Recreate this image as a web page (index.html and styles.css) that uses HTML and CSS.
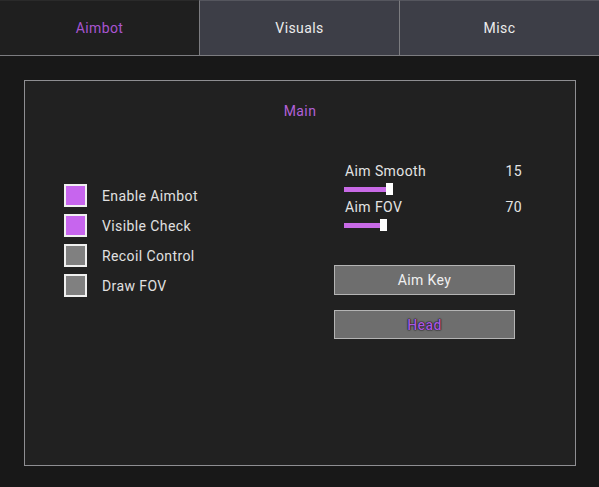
FILE: index.html
```html
<!DOCTYPE html>
<html lang="en">
    <head>
        <meta charset="UTF-8" />
        <meta name="viewport" content="width=device-width, initial-scale=1.0" />
        <title>Menu</title>
        <link rel="stylesheet" href="styles.css">
    </head>
    <body>
        <div class="tabs">
            <div class="tab active">Aimbot</div>
            <div class="tab">Visuals</div>
            <div class="tab">Misc</div>
        </div>

        <div class="panel">
            <div class="panel-title">Main</div>
            <div class="panel-body">
                <div class="checks">
                    <div class="check-row">
                        <span class="box on"></span>
                        <span class="check-label">Enable Aimbot</span>
                    </div>
                    <div class="check-row">
                        <span class="box on"></span>
                        <span class="check-label">Visible Check</span>
                    </div>
                    <div class="check-row">
                        <span class="box"></span>
                        <span class="check-label">Recoil Control</span>
                    </div>
                    <div class="check-row">
                        <span class="box"></span>
                        <span class="check-label">Draw FOV</span>
                    </div>
                </div>

                <div class="controls">
                    <div class="slider">
                        <div class="slider-head">
                            <span>Aim Smooth</span>
                            <span>15</span>
                        </div>
                        <div class="slider-bar">
                            <span class="track" style="width: 43px"></span>
                            <span class="thumb"></span>
                        </div>
                    </div>
                    <div class="slider">
                        <div class="slider-head">
                            <span>Aim FOV</span>
                            <span>70</span>
                        </div>
                        <div class="slider-bar">
                            <span class="track" style="width: 37px"></span>
                            <span class="thumb"></span>
                        </div>
                    </div>

                    <button class="btn">Aim Key</button>
                    <button class="btn btn-purple">Head</button>
                </div>
            </div>
        </div>
    </body>
</html>
```

FILE: styles.css
```css
body {
    margin: 0;
    width: 599px;
    height: 487px;
    background-color: #181818;
    font-family: Roboto, "Liberation Sans", sans-serif;
    font-size: 14px;
    letter-spacing: 0.4px;
    color: #e4e4e4;
}
.tabs {
    display: flex;
    height: 55px;
    border-bottom: 1px solid #7c7c80;
}
.tab {
    flex: 1;
    display: flex;
    justify-content: center;
    align-items: center;
    background-color: #3d3e47;
    border-top: 1px solid #55565e;
    border-left: 1px solid #7c7c80;
    color: #ececec;
}
.tab.active {
    flex: 0 0 199px;
    background-color: #1f1f1f;
    border-top: 1px solid #2a2a2a;
    border-left: none;
    color: #a855d0;
}
.panel {
    box-sizing: border-box;
    margin: 24px 0 0 24px;
    width: 552px;
    height: 386px;
    border: 1px solid #8e8e92;
    background-color: #212121;
}
.panel-title {
    padding-top: 21px;
    line-height: 18px;
    text-align: center;
    color: #b160d8;
}
.panel-body {
    display: flex;
}
.checks {
    width: 270px;
    margin-left: 39px;
    padding-top: 64px;
    display: flex;
    flex-direction: column;
    gap: 7px;
}
.check-row {
    display: flex;
    align-items: center;
    height: 23px;
}
.box {
    box-sizing: border-box;
    width: 23px;
    height: 23px;
    border: 2px solid #f0f0f0;
    background-color: #808080;
}
.box.on {
    background-color: #c765ee;
}
.check-label {
    margin-left: 15px;
    color: #e0e0e0;
}
.controls {
    width: 181px;
    padding-top: 42px;
    display: flex;
    flex-direction: column;
}
.slider {
    height: 36px;
    padding-left: 10px;
    width: 178px;
}
.slider-head {
    display: flex;
    justify-content: space-between;
    line-height: 18px;
    padding-left: 1px;
}
.slider-bar {
    display: flex;
    align-items: center;
    height: 14px;
    margin-top: 2px;
}
.track {
    height: 5px;
    background-color: #c86ae6;
}
.thumb {
    width: 7px;
    height: 12px;
    margin-left: -1px;
    background-color: #ffffff;
}
.btn {
    box-sizing: border-box;
    width: 181px;
    height: 30px;
    margin-top: 31px;
    border: 1px solid #b4b4b4;
    background-color: #6e6e6e;
    color: #f0f0f0;
    font-family: Roboto, "Liberation Sans", sans-serif;
    font-size: 14px;
    letter-spacing: 0.4px;
    padding: 0;
}
.btn-purple {
    height: 29px;
    margin-top: 15px;
    color: #a858dc;
    font-weight: 500;
    text-shadow: 0 0 1px #141414, 0 0 1px #141414, 0 0 2px #202020;
}
```
